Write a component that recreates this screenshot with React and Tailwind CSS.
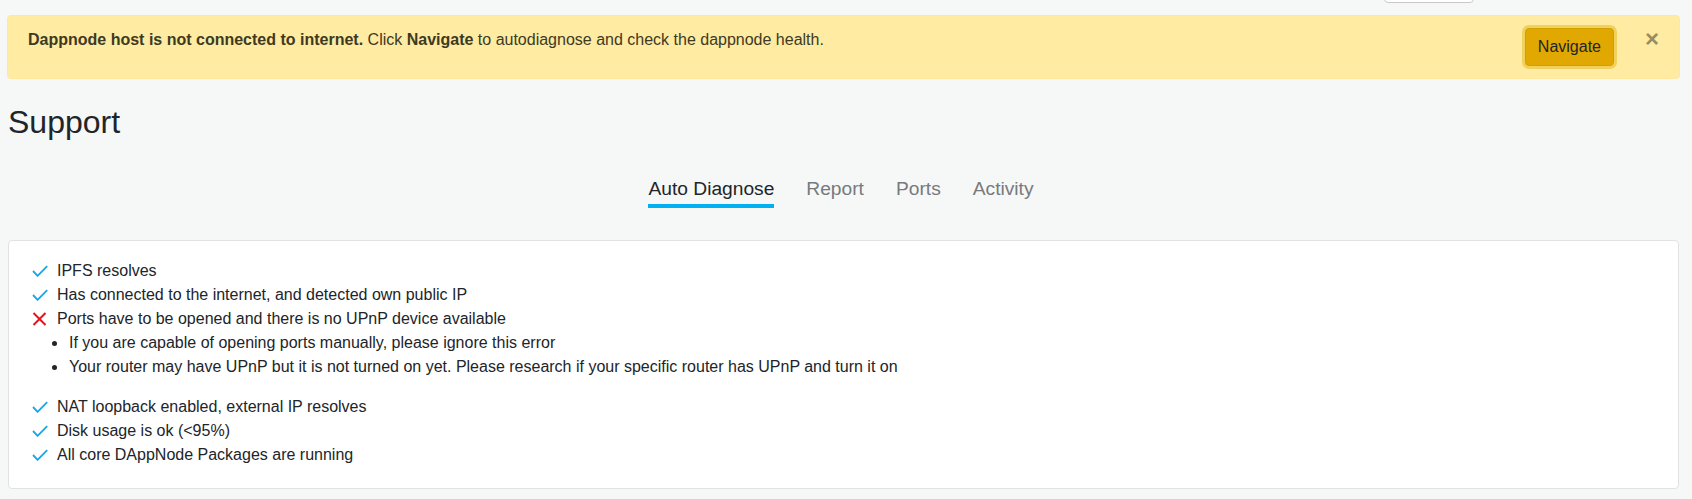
import React from 'react';

function CheckIcon() {
  return (
    <svg width="16" height="12" viewBox="0 0 16 12" fill="none" className="shrink-0">
      <path d="M1 6 L5.6 10.8 L15.2 1.2" stroke="#1ba6e8" strokeWidth="1.9" />
    </svg>
  );
}

function CrossIcon() {
  return (
    <svg width="16" height="14" viewBox="0 0 16 14" fill="none" className="shrink-0">
      <path d="M1.5 1 L13.5 13 M13.5 1 L1.5 13" stroke="#e5141b" strokeWidth="2" />
    </svg>
  );
}

function Row({ ok, children }) {
  return (
    <div className="flex items-center h-6">
      <span className="w-4 mr-[9px] flex justify-center">{ok ? <CheckIcon /> : <CrossIcon />}</span>
      <span>{children}</span>
    </div>
  );
}

function Bullet({ children }) {
  return (
    <div className="flex items-center h-6 pl-[20px]">
      <span className="w-[5px] h-[5px] rounded-full bg-[#212529] mr-[12px]" />
      <span>{children}</span>
    </div>
  );
}

export default function App() {
  const tabs = ['Auto Diagnose', 'Report', 'Ports', 'Activity'];
  const active = 'Auto Diagnose';

  return (
    <div className="min-h-screen bg-[#f6f7f7] pl-2 pr-[13px] text-[#212529] font-['Liberation_Sans',Arial,sans-serif]">
      {/* bottom edge of a control that is scrolled out of view */}
      <div className="h-[3px] overflow-hidden">
        <div className="ml-[1376px] w-[90px] h-[30px] -mt-[27px] bg-white border border-[#c9c9c9] rounded" />
      </div>

      <div className="mt-[12px] -mx-px flex items-start bg-[#ffeba1] border border-[#ffe89c] rounded-[4px] pl-5 py-3 text-[16px] text-[#3d3a24]">
        <div className="flex-1 leading-6">
          <b>Dappnode host is not connected to internet.</b> Click <b>Navigate</b> to autodiagnose and check the dappnode health.
        </div>
        <button className="h-[38px] px-3 bg-[#e0a800] border border-[#d39e00] rounded-[4px] text-[16px] text-[#212529] shadow-[0_0_0_3px_rgba(232,186,40,0.55)]">
          Navigate
        </button>
        <button className="ml-[11px] w-[54px] -mt-px text-[24px] leading-6 font-bold text-black opacity-40">×</button>
      </div>

      <h1 className="mt-[24px] text-[32px] leading-[1.2] font-normal">Support</h1>

      <div className="mt-[34px] flex justify-center gap-8 pr-[5px]">
        {tabs.map(t => (
          <div key={t} className="flex flex-col">
            <span className={`text-[19.2px] leading-[28.8px] ${t === active ? 'text-[#212529]' : 'text-[#767a7e]'}`}>{t}</span>
            <span className={`h-1 ${t === active ? 'bg-[#00b0f0]' : 'bg-transparent'}`} />
          </div>
        ))}
      </div>

      <div className="mt-8 bg-white border border-[#e0e2e3] rounded-[4px] pl-[23px] pt-[18px] pb-[21px] text-[16px]">
        <Row ok>IPFS resolves</Row>
        <Row ok>Has connected to the internet, and detected own public IP</Row>
        <Row ok={false}>Ports have to be opened and there is no UPnP device available</Row>
        <Bullet>If you are capable of opening ports manually, please ignore this error</Bullet>
        <Bullet>Your router may have UPnP but it is not turned on yet. Please research if your specific router has UPnP and turn it on</Bullet>
        <div className="h-4" />
        <Row ok>NAT loopback enabled, external IP resolves</Row>
        <Row ok>Disk usage is ok (&lt;95%)</Row>
        <Row ok>All core DAppNode Packages are running</Row>
      </div>
    </div>
  );
}
